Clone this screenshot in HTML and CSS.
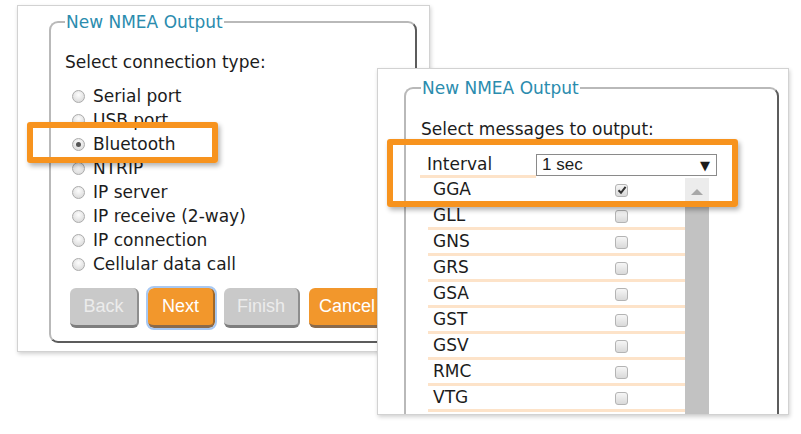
FILE: index.html
```html
<!DOCTYPE html>
<html lang="en">
<head>
<meta charset="UTF-8">
<title>New NMEA Output</title>
<link rel="stylesheet" href="styles.css">
</head>
<body>
<div class="desk">

<!-- step 1: connection type -->
<div class="win win-left">
<fieldset class="group">
<legend>New NMEA Output</legend>
<p class="prompt">Select connection type:</p>
<ul class="choices">
<li><span class="radio"></span>Serial port</li>
<li><span class="radio"></span>USB port</li>
<li><span class="radio checked"></span>Bluetooth</li>
<li><span class="radio"></span>NTRIP</li>
<li><span class="radio"></span>IP server</li>
<li><span class="radio"></span>IP receive (2-way)</li>
<li><span class="radio"></span>IP connection</li>
<li><span class="radio"></span>Cellular data call</li>
</ul>
<div class="buttons">
<button class="btn btn-back" disabled>Back</button>
<button class="btn btn-next on">Next</button>
<button class="btn btn-finish" disabled>Finish</button>
<button class="btn btn-cancel on">Cancel</button>
</div>
</fieldset>
</div>

<!-- step 2: messages -->
<div class="win win-right">
<fieldset class="group">
<legend>New NMEA Output</legend>
<p class="prompt">Select messages to output:</p>
<div class="interval">
<span class="interval-label">Interval</span>
<div class="select">1 sec<span class="arrow">&#9660;</span></div>
</div>
<div class="msglist">
<table class="msgs">
<tr><td>GGA</td><td><span class="check checked"><svg viewBox="0 0 10 10" width="10" height="10"><path d="M1.5 5.2 L4 7.8 L8.6 1.8" fill="none" stroke="#333" stroke-width="2"/></svg></span></td></tr>
<tr><td>GLL</td><td><span class="check"></span></td></tr>
<tr><td>GNS</td><td><span class="check"></span></td></tr>
<tr><td>GRS</td><td><span class="check"></span></td></tr>
<tr><td>GSA</td><td><span class="check"></span></td></tr>
<tr><td>GST</td><td><span class="check"></span></td></tr>
<tr><td>GSV</td><td><span class="check"></span></td></tr>
<tr><td>RMC</td><td><span class="check"></span></td></tr>
<tr><td>VTG</td><td><span class="check"></span></td></tr>
<tr><td>ZDA</td><td><span class="check"></span></td></tr>
</table>
<div class="scrollbar">
<div class="sb-up"><span class="sb-arrow"></span></div>
<div class="sb-thumb"></div>
</div>
</div>
</fieldset>
</div>

<!-- callouts -->
<div class="callout callout-bt"></div>
<div class="callout callout-interval"></div>

</div>
</body>
</html>
```

FILE: styles.css
```css
body {
margin: 0;
background: #fff;
font-family: "DejaVu Sans", sans-serif;
font-size: 17px;
color: #1c1c1c;
}

.desk {
position: relative;
width: 801px;
height: 434px;
overflow: hidden;
}

.win {
position: absolute;
box-sizing: border-box;
background: #fff;
border: 1px solid #d2d2d2;
box-shadow: 1px 2px 4px rgba(0, 0, 0, 0.18);
overflow: hidden;
}

.win-left {
left: 17px;
top: 5px;
width: 413px;
height: 347px;
}

.win-right {
left: 377px;
top: 68px;
width: 412px;
height: 347px;
}

.group {
box-sizing: border-box;
margin: 0;
border: 2px solid;
border-color: #b9b9b9 #5c5c5c #5c5c5c #b9b9b9;
border-radius: 9px;
}

.group legend {
color: #2b8cae;
padding: 0 1px;
margin-left: 0;
line-height: 20px;
}

.prompt {
margin: 0;
line-height: 20px;
}

/* left window */
.win-left .group {
margin: 6px 0 0 31px;
width: 368px;
height: 331px;
padding: 0 0 0 14px;
}

.win-left .prompt {
margin-top: 20px;
}

.choices {
list-style: none;
margin: 12px 0 0;
padding: 0;
}

.choices li {
display: flex;
align-items: center;
height: 24px;
}

.radio {
box-sizing: border-box;
width: 13px;
height: 13px;
margin: 0 8px 0 7px;
border: 1px solid #ababab;
border-radius: 50%;
background: radial-gradient(circle at 50% 35%, #fdfdfd, #d3d3d3);
position: relative;
}

.radio.checked::after {
content: "";
position: absolute;
left: 3px;
top: 3px;
width: 5px;
height: 5px;
border-radius: 50%;
background: #555;
}

.buttons {
display: flex;
gap: 9px;
margin: 12px 0 0 5px;
}

.btn {
box-sizing: border-box;
height: 40px;
border: none;
border-radius: 6px;
border-right: 2px solid #8e8e8e;
border-bottom: 3px solid #7e7e7e;
background: #c9c9c9;
color: #ececec;
font-family: "Liberation Sans", Arial, sans-serif;
font-size: 18px;
padding: 0;
}

.btn.on {
background: #f2972c;
color: #fff;
border-right-color: #a0682a;
border-bottom-color: #8a6a4c;
}

.btn-back { width: 69px; }
.btn-next { width: 67px; outline: 2px solid #a8c8f2; outline-offset: 0; }
.btn-finish { width: 76px; }
.btn-cancel { width: 78px; }

/* right window */
.win-right .group {
margin: 9px 0 0 26px;
width: 375px;
height: 400px;
padding: 0 0 0 15px;
}

.win-right .prompt {
margin-top: 21px;
}

.interval {
display: flex;
align-items: flex-start;
margin: 14px 0 0 -1px;
}

.interval-label {
box-sizing: border-box;
width: 116px;
height: 25px;
padding-left: 7px;
line-height: 22px;
border-bottom: 3px solid #fde3c9;
}

.select {
box-sizing: border-box;
display: flex;
justify-content: space-between;
align-items: center;
width: 181px;
height: 22px;
margin-top: 1px;
padding: 0 6px 0 5px;
border: 1px solid #8a8a8a;
font-family: "Liberation Sans", Arial, sans-serif;
font-size: 17px;
}

.arrow {
font-family: "DejaVu Sans", sans-serif;
font-size: 13px;
}

.msglist {
display: flex;
margin-left: 7px;
}

.msgs {
width: 257px;
border-collapse: collapse;
}

.msgs td {
height: 23px;
padding: 0 0 0 5px;
border-bottom: 3px solid #fde3c9;
line-height: 23px;
}

.msgs td + td {
width: 70px;
padding: 0;
}

.check {
box-sizing: border-box;
display: flex;
align-items: center;
justify-content: center;
width: 13px;
height: 13px;
margin-top: 1px;
border: 1px solid #b4b4b4;
border-radius: 3px;
background: linear-gradient(#f6f6f6, #d9d9d9);
}

.scrollbar {
width: 24px;
display: flex;
flex-direction: column;
}

.sb-up {
height: 27px;
background: #ececec;
display: flex;
align-items: center;
justify-content: center;
}

.sb-arrow {
width: 0;
height: 0;
border-left: 6px solid transparent;
border-right: 6px solid transparent;
border-bottom: 6px solid #a8a8a8;
}

.sb-thumb {
flex: 1;
background: #c2c2c2;
}

/* orange highlight frames */
.callout {
position: absolute;
box-sizing: border-box;
border: 6px solid #f7931e;
border-radius: 3px;
box-shadow: 2px 3px 5px rgba(0, 0, 0, 0.3);
}

.callout-bt {
left: 27px;
top: 122px;
width: 191px;
height: 41px;
}

.callout-interval {
left: 387px;
top: 139px;
width: 351px;
height: 68px;
}
```
